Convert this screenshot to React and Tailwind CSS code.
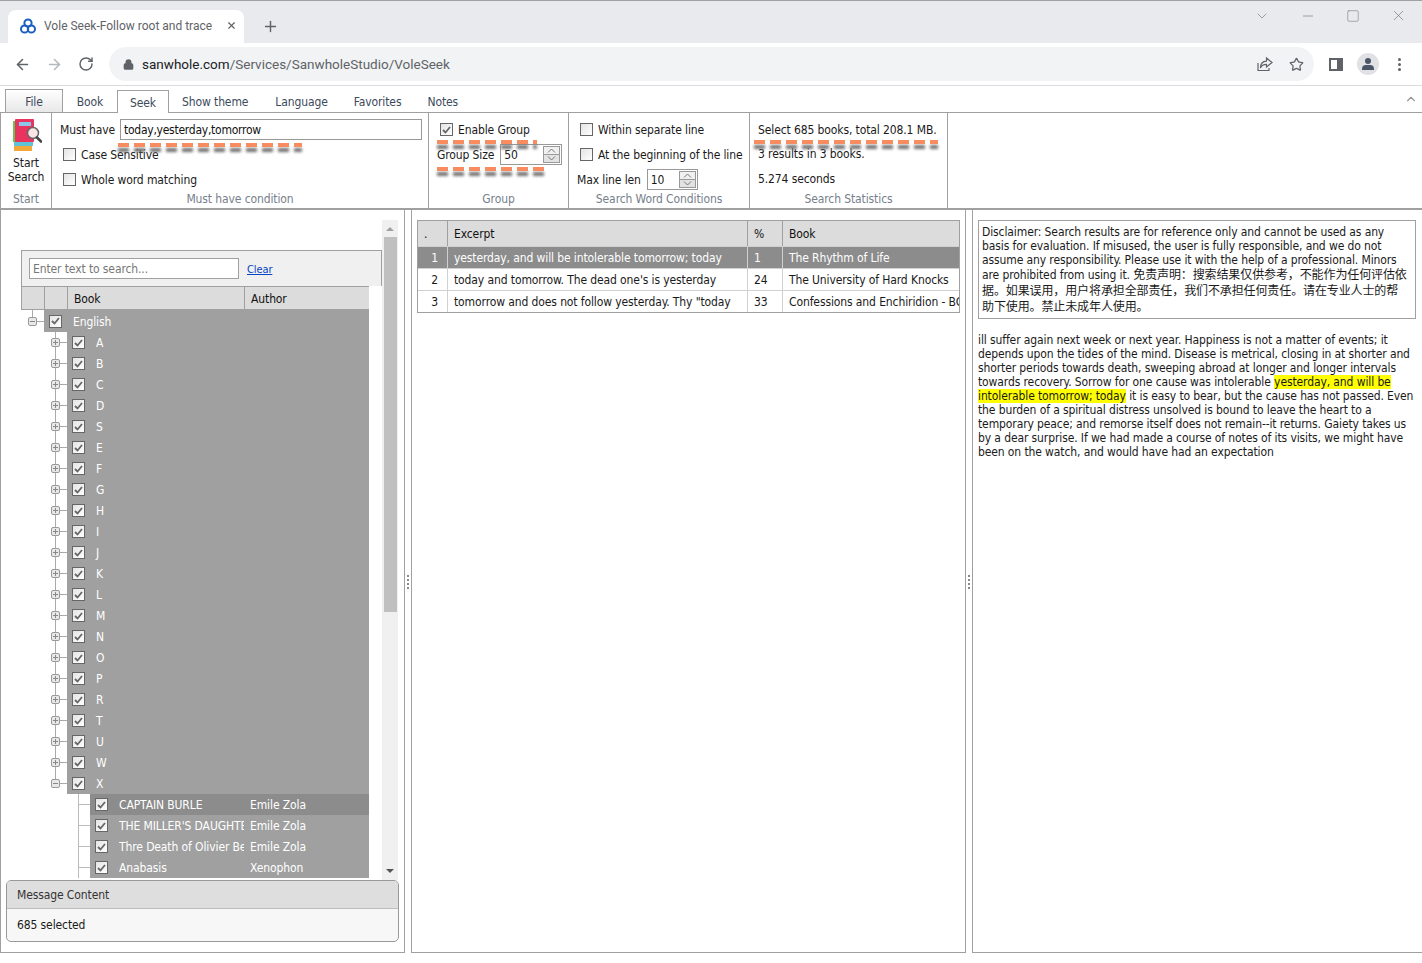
import { ArrowLeft, ArrowRight, RotateCw, Lock, Star, Plus, X, ChevronDown, ChevronUp, Minus, Square } from 'lucide-react'

const letters = ['A', 'B', 'C', 'D', 'S', 'E', 'F', 'G', 'H', 'I', 'J', 'K', 'L', 'M', 'N', 'O', 'P', 'R', 'T', 'U', 'W', 'X']

const books = [
  ['CAPTAIN BURLE', 'Emile Zola'],
  ["THE MILLER'S DAUGHTER", 'Emile Zola'],
  ['Thre Death of Olivier Becaille', 'Emile Zola'],
  ['Anabasis', 'Xenophon'],
]

const results = [
  ['1', 'yesterday, and will be intolerable tomorrow; today', '1', 'The Rhythm of Life'],
  ['2', "today and tomorrow. The dead one's is yesterday", '24', 'The University of Hard Knocks'],
  ['3', 'tomorrow and does not follow yesterday. Thy "today', '33', 'Confessions and Enchiridion - BOOK'],
]

const Dashes = ({ className }) => (
  <div className={`absolute pointer-events-none ${className}`}>
    <div className="absolute left-0 right-0 top-[5px] h-[4px] blur-[1.5px] bg-[repeating-linear-gradient(90deg,#707070_0,#707070_11px,transparent_11px,transparent_16px)]"></div>
    <div className="absolute left-0 right-0 top-0 h-[4px] bg-[repeating-linear-gradient(90deg,#f78c60_0,#f78c60_11px,transparent_11px,transparent_16px)]"></div>
  </div>
)

const Check = ({ checked, className = '' }) => (
  <span className={`w-[13px] h-[13px] flex-none border border-[#666] bg-gradient-to-br from-[#e4e4e4] to-white flex items-center justify-center ${className}`}>
    {checked && (
      <svg width="9" height="8" viewBox="0 0 9 8" fill="none" stroke="#666" strokeWidth="1.8">
        <path d="M1 4l2.5 2.5L8 1" />
      </svg>
    )}
  </span>
)

const Spinner = () => (
  <span className="flex flex-col w-[17px] h-[17px] border border-[#999] mr-px my-px flex-none">
    <span className="flex-1 flex items-center justify-center border-b border-[#999] bg-[#f0f0f0]">
      <svg width="9" height="5" viewBox="0 0 9 5" fill="none" stroke="#777"><path d="M1 4.5l3.5-3.5L8 4.5" /></svg>
    </span>
    <span className="flex-1 flex items-center justify-center bg-[#e2e2e2]">
      <svg width="9" height="5" viewBox="0 0 9 5" fill="none" stroke="#777"><path d="M1 .5L4.5 4 8 .5" /></svg>
    </span>
  </span>
)

const Expander = ({ open }) => (
  <span className="w-[9px] h-[9px] border border-[#999] rounded-[2px] bg-[#e8e8e8] relative flex-none">
    <span className="absolute left-px right-px top-[3px] h-px bg-[#888]"></span>
    {!open && <span className="absolute top-px bottom-px left-[3px] w-px bg-[#888]"></span>}
  </span>
)

const Grip = () => (
  <div className="w-[6px] flex-none flex items-center justify-center">
    <div className="flex flex-col gap-[2px]">
      <span className="w-[2px] h-[2px] bg-[#888]"></span>
      <span className="w-[2px] h-[2px] bg-[#888]"></span>
      <span className="w-[2px] h-[2px] bg-[#888]"></span>
      <span className="w-[2px] h-[2px] bg-[#888]"></span>
    </div>
  </div>
)

const GroupTitle = ({ children }) => (
  <div className="h-[19px] flex-none leading-[21px] text-center text-[#76808c]">{children}</div>
)

const App = () => {
  return (
    <div className="w-[1422px] h-[963px] overflow-hidden bg-white text-[12px] tracking-[-0.11px] text-[#1a1a1a] font-['DejaVu_Sans_Condensed','Noto_Sans_CJK_SC',sans-serif]">
      {/* Browser tabs */}
      <div className="h-[43px] bg-[#e8eaed] border-t border-[#a0a0a0] flex items-end pl-[8px] tracking-normal font-['Roboto',sans-serif]">
        <div className="w-[236px] h-[33px] bg-white rounded-t-[8px] flex items-center pl-[12px] pr-[7px] pb-[2px]">
          <svg width="16" height="16" viewBox="0 0 16 16" fill="none" stroke="#1d5fbf" strokeWidth="2" className="flex-none">
            <circle cx="8" cy="5" r="3.6" />
            <circle cx="4.6" cy="11" r="3.6" />
            <circle cx="11.4" cy="11" r="3.6" />
          </svg>
          <span className="ml-[8px] w-[168px] overflow-hidden whitespace-nowrap text-[12px] text-[#5f6368]">Vole Seek-Follow root and trace</span>
          <X size={11} strokeWidth={2.5} className="ml-auto text-[#5f6368]" />
        </div>
        <Plus size={17} strokeWidth={2} className="ml-[18px] mb-[8px] text-[#5f6368]" />
        <div className="ml-auto mb-[19px] flex items-center text-[#777] pr-[15px] gap-[30px]">
          <ChevronDown size={16} strokeWidth={1} />
          <Minus size={16} strokeWidth={1} />
          <Square size={14} strokeWidth={1} />
          <X size={17} strokeWidth={1} />
        </div>
      </div>

      {/* Browser toolbar */}
      <div className="h-[43px] border-b border-[#dadce0] flex items-center pl-[14px] tracking-normal font-['Roboto',sans-serif]">
        <ArrowLeft size={17} strokeWidth={2.2} className="text-[#5f6368]" />
        <ArrowRight size={17} strokeWidth={2.2} className="ml-[15px] text-[#b5b8bd]" />
        <RotateCw size={16} strokeWidth={2.2} className="ml-[15px] text-[#5f6368]" />
        <div className="ml-[15px] w-[1205px] h-[34px] rounded-full bg-[#f1f3f4] flex items-center pl-[14px] pr-[10px]">
          <Lock size={11} strokeWidth={3} className="text-[#5f6368] fill-[#5f6368]" />
          <span className="ml-[8px] pt-[1px] text-[13.5px] text-[#5f6368] whitespace-nowrap"><span className="text-[#202124]">sanwhole.com</span>/Services/SanwholeStudio/VoleSeek</span>
          <svg width="16" height="16" viewBox="0 0 16 16" fill="none" stroke="#5f6368" strokeWidth="1.2" className="ml-auto">
            <path d="M1 7v7.5h11V12" />
            <path d="M9.5 2l5.5 4.5-5.5 4.5V8.3C6.5 8.3 4.5 9.500 3.5 12c0-4 2.500-6.600 6-6.800z" />
          </svg>
          <Star size={15} strokeWidth={2} className="ml-[16px] text-[#5f6368]" />
        </div>
        <span className="ml-[15px] w-[14px] h-[13px] border-[2px] border-[#5f6368] border-r-[6px] flex-none"></span>
        <span className="ml-[14px] w-[22px] h-[22px] rounded-full bg-[#dfe1e5] flex flex-col items-center justify-center flex-none">
          <span className="w-[6px] h-[6px] rounded-full bg-[#4a5568]"></span>
          <span className="w-[12px] h-[5px] mt-px rounded-t-[4px] bg-[#4a5568]"></span>
        </span>
        <span className="ml-[19px] flex flex-col gap-[2px] flex-none">
          <span className="w-[3px] h-[3px] rounded-full bg-[#5f6368]"></span>
          <span className="w-[3px] h-[3px] rounded-full bg-[#5f6368]"></span>
          <span className="w-[3px] h-[3px] rounded-full bg-[#5f6368]"></span>
        </span>
      </div>

      {/* Ribbon tabs */}
      <div className="h-[26px] flex items-end pl-[5px] relative text-[#3b4a5a]">
        <div className="w-[58px] h-[23px] pt-px border border-b-0 border-[#a0a0a0] bg-gradient-to-b from-white to-[#e8e8e8] flex items-center justify-center">File</div>
        <div className="w-[54px] h-[23px] pt-[2px] flex items-center justify-center">Book</div>
        <div className="w-[52px] h-[23px] pt-px border border-b-0 border-[#a0a0a0] bg-white flex items-center justify-center relative z-10 -mb-px">Seek</div>
        <div className="ml-[13px] h-[23px] pt-[2px] flex items-center">Show theme</div>
        <div className="ml-[27px] h-[23px] pt-[2px] flex items-center">Language</div>
        <div className="ml-[26px] h-[23px] pt-[2px] flex items-center">Favorites</div>
        <div className="ml-[26px] h-[23px] pt-[2px] flex items-center">Notes</div>
        <ChevronUp size={14} strokeWidth={2} className="ml-auto mr-[4px] mb-[6px] text-[#999]" />
      </div>

      {/* Ribbon body */}
      <div className="h-[98px] border-t border-b-2 border-[#a0a0a0] flex relative">
        <div className="w-[52px] border-l border-r border-[#a0a0a0] flex flex-col">
          <div className="flex-1 min-h-0 flex flex-col items-center">
            <svg width="32" height="34" viewBox="0 0 32 34" className="mt-[5px]">
              <rect x="4" y="28" width="18" height="5" fill="#f0a93a" />
              <rect x="4" y="24" width="19" height="4" fill="#5fc2d6" />
              <rect x="3" y="3" width="3" height="21" fill="#6cc24a" />
              <rect x="5" y="1" width="19" height="23" rx="1" fill="#e8345f" />
              <rect x="9" y="4" width="12" height="4" fill="#8cc4ea" />
              <circle cx="23" cy="15" r="5.5" fill="#fbe4e4" stroke="#666" strokeWidth="1.500" />
              <path d="M27 19.500l4 4" stroke="#444" strokeWidth="2.500" strokeLinecap="round" />
            </svg>
            <div className="mt-[4px] text-center leading-[14px]">Start<br />Search</div>
          </div>
          <GroupTitle>Start</GroupTitle>
        </div>

        <div className="w-[377px] border-r border-[#a0a0a0] flex flex-col relative">
          <div className="flex-1 min-h-0 pl-[8px] pt-[6px]">
            <div className="flex items-center h-[21px]">
              <span className="text-[#222]">Must have</span>
              <div className="ml-[5px] w-[302px] h-[21px] border border-[#999] pl-[3px] leading-[20px] tracking-[-0.25px] text-[#111]">today,yesterday,tomorrow</div>
            </div>
            <label className="flex items-center mt-[6px] h-[17px] pl-[3px]">
              <Check className="mr-[5px]" />Case Sensitive
            </label>
            <label className="flex items-center mt-[8px] h-[17px] pl-[3px]">
              <Check className="mr-[5px]" />Whole word matching
            </label>
          </div>
          <GroupTitle>Must have condition</GroupTitle>
          <Dashes className="left-[66px] top-[30px] w-[184px] h-[8px]" />
        </div>

        <div className="w-[140px] border-r border-[#a0a0a0] flex flex-col relative">
          <div className="flex-1 min-h-0 pl-[8px] pt-[8px]">
            <label className="flex items-center h-[17px] pl-[3px]">
              <Check checked className="mr-[5px]" />Enable Group
            </label>
            <div className="flex items-center mt-[6px] h-[21px]">
              <span>Group Size</span>
              <div className="ml-[6px] w-[62px] h-[21px] border border-[#999] pl-[3px] flex items-center justify-between">50<Spinner /></div>
            </div>
          </div>
          <GroupTitle>Group</GroupTitle>
          <Dashes className="left-[8px] top-[27px] w-[100px] h-[8px]" />
          <Dashes className="left-[8px] top-[54px] w-[107px] h-[8px]" />
        </div>

        <div className="w-[181px] border-r border-[#a0a0a0] flex flex-col">
          <div className="flex-1 min-h-0 pl-[8px] pt-[8px]">
            <label className="flex items-center h-[17px] pl-[3px]">
              <Check className="mr-[5px]" />Within separate line
            </label>
            <label className="flex items-center mt-[8px] h-[17px] pl-[3px]">
              <Check className="mr-[5px]" />At the beginning of the line
            </label>
            <div className="flex items-center mt-[6px] h-[21px]">
              <span>Max line len</span>
              <div className="ml-[6px] w-[51px] h-[21px] border border-[#999] pl-[3px] flex items-center justify-between">10<Spinner /></div>
            </div>
          </div>
          <GroupTitle>Search Word Conditions</GroupTitle>
        </div>

        <div className="w-[198px] border-r border-[#a0a0a0] flex flex-col relative">
          <div className="flex-1 min-h-0 pl-[8px] pt-[9px] leading-[17px]">
            <div>Select 685 books, total 208.1 MB.</div>
            <div className="mt-[7px]">3 results in 3 books.</div>
            <div className="mt-[8px]">5.274 seconds</div>
          </div>
          <GroupTitle>Search Statistics</GroupTitle>
          <Dashes className="left-[4px] top-[27px] w-[184px] h-[8px]" />
        </div>
      </div>

      {/* Main panes */}
      <div className="h-[743px] flex">
        {/* Left pane */}
        <div className="w-[405px] flex-none border-l border-r border-b border-[#a0a0a0] flex flex-col pb-[10px]">
          <div className="flex-1 flex min-h-0 overflow-hidden">
            <div className="ml-[20px] w-[361px] pt-[40px]">
              <div className="h-[36px] bg-[#f0f0f0] border border-[#a0a0a0] border-b-0 flex items-center pl-[7px]">
                <div className="w-[210px] h-[21px] bg-white border border-[#a0a0a0] pl-[3px] leading-[21px] text-[#777]">Enter text to search...</div>
                <a className="ml-[8px] mt-[4px] text-[11px] text-[#0645c8] underline">Clear</a>
              </div>
              <div className="w-[348px] h-[24px] bg-[#dcdcdc] border-t border-b border-l border-[#a0a0a0] flex text-[#111]">
                <div className="w-[23px] border-r border-[#a0a0a0]"></div>
                <div className="w-[23px] border-r border-[#a0a0a0]"></div>
                <div className="w-[177px] border-r border-[#a0a0a0] pl-[6px] leading-[24px]">Book</div>
                <div className="pl-[6px] leading-[24px]">Author</div>
              </div>
              <div className="w-[348px] text-white">
                <div className="h-[22px] flex items-center">
                  <span className="w-[7px]"></span>
                  <div className="relative w-[9px] h-full flex items-center flex-none">
                    <span className="absolute top-0 bottom-1/2 left-[4px] w-px bg-[#aaa]"></span>
                    <Expander open />
                  </div>
                  <span className="w-[7px] h-px bg-[#aaa]"></span>
                  <div className="flex-1 h-full bg-[#a0a0a0] flex items-center pl-[5px]">
                    <Check checked />
                    <span className="ml-[11px] pt-[2px]">English</span>
                  </div>
                </div>
                {letters.map((l) => (
                  <div key={l} className="h-[21px] flex items-center">
                    <span className="w-[30px]"></span>
                    <div className="relative w-[9px] h-full flex items-center flex-none">
                      <span className={`absolute top-0 left-[4px] w-px bg-[#aaa] ${l === 'X' ? 'bottom-1/2' : 'bottom-0'}`}></span>
                      <Expander open={l === 'X'} />
                    </div>
                    <span className="w-[7px] h-px bg-[#aaa]"></span>
                    <div className="flex-1 h-full bg-[#a0a0a0] flex items-center pl-[5px]">
                      <Check checked />
                      <span className="ml-[11px]">{l}</span>
                    </div>
                  </div>
                ))}
                {books.map(([title, author], i) => (
                  <div key={title} className="h-[21px] flex items-center">
                    <span className="w-[57px]"></span>
                    <div className="w-[12px] h-full border-l border-[#bbb] flex items-center">
                      <span className="w-full h-px bg-[#bbb]"></span>
                    </div>
                    <div className={`flex-1 h-full flex items-center pl-[5px] ${i === 0 ? 'bg-[#8c8c8c]' : 'bg-[#a0a0a0]'}`}>
                      <Check checked />
                      <span className="ml-[11px] mr-[6px] w-[125px] overflow-hidden whitespace-nowrap">{title}</span>
                      <span>{author}</span>
                    </div>
                  </div>
                ))}
              </div>
            </div>
            <div className="mt-[10px] w-[16px] bg-[#f0f0f0] flex flex-col items-center">
              <svg width="8" height="4" viewBox="0 0 8 4" className="mt-[7px] flex-none"><path d="M0 4l4-4 4 4z" fill="#a0a0a0" /></svg>
              <div className="mt-[6px] w-[13px] h-[375px] bg-[#c0c0c0]"></div>
              <svg width="8" height="4" viewBox="0 0 8 4" className="mt-auto mb-[7px] flex-none"><path d="M0 0l4 4 4-4z" fill="#555" /></svg>
            </div>
          </div>
          <div className="mx-[5px] h-[62px] flex-none border border-[#999] rounded-[5px] overflow-hidden bg-[#f7f7f7]">
            <div className="h-[28px] bg-[#dedede] border-b border-[#bdbdbd] pl-[10px] leading-[29px] text-[#333]">Message Content</div>
            <div className="pl-[10px] pt-[7px]">685 selected</div>
          </div>
        </div>

        <Grip />

        {/* Middle pane */}
        <div className="w-[555px] flex-none border-l border-r border-b border-[#a0a0a0] pl-[5px] pt-[10px]">
          <div className="w-[543px] border border-[#a0a0a0] overflow-hidden">
            <div className="h-[25px] flex bg-[#dcdcdc] leading-[27px] text-[#111]">
              <div className="w-[30px] border-r border-[#a0a0a0] pl-[6px]">.</div>
              <div className="w-[300px] border-r border-[#a0a0a0] pl-[6px]">Excerpt</div>
              <div className="w-[35px] border-r border-[#a0a0a0] pl-[6px]">%</div>
              <div className="flex-1 pl-[6px]">Book</div>
            </div>
            {results.map((r, i) => (
              <div key={r[0]} className={`h-[22px] flex leading-[23px] whitespace-nowrap border-t border-[#d0d0d0] ${i === 0 ? 'bg-[#8c8c8c] text-white' : ''}`}>
                <div className="w-[30px] border-r border-[#d0d0d0] pr-[9px] text-right">{r[0]}</div>
                <div className="w-[300px] border-r border-[#d0d0d0] pl-[6px] overflow-hidden">{r[1]}</div>
                <div className="w-[35px] border-r border-[#d0d0d0] pl-[6px]">{r[2]}</div>
                <div className="flex-1 min-w-0 pl-[6px] overflow-hidden">{r[3]}</div>
              </div>
            ))}
          </div>
        </div>

        <Grip />

        {/* Right pane */}
        <div className="flex-1 min-w-0 border-l border-b border-[#a0a0a0] pl-[5px] pr-[6px] pt-[10px]">
          <div className="h-[99px] border border-[#a0a0a0] pl-[3px] pt-[4px] leading-[14px] whitespace-nowrap">
            Disclaimer: Search results are for reference only and cannot be used as any<br />
            basis for evaluation. If misused, the user is fully responsible, and we do not<br />
            assume any responsibility. Please use it with the help of a professional. Minors<br />
            <span className="leading-[16px]">are prohibited from using it. 免责声明：搜索结果仅供参考，不能作为任何评估依</span><br />
            <span className="leading-[16px]">据。如果误用，用户将承担全部责任，我们不承担任何责任。请在专业人士的帮</span><br />
            <span className="leading-[16px]">助下使用。禁止未成年人使用。</span>
          </div>
          <div className="mt-[14px] leading-[14px] whitespace-nowrap">
            ill suffer again next week or next year. Happiness is not a matter of events; it<br />
            depends upon the tides of the mind. Disease is metrical, closing in at shorter and<br />
            shorter periods towards death, sweeping abroad at longer and longer intervals<br />
            towards recovery. Sorrow for one cause was intolerable <span className="bg-[#ffff00]">yesterday, and will be</span><br />
            <span className="bg-[#ffff00]">intolerable tomorrow; today</span> it is easy to bear, but the cause has not passed. Even<br />
            the burden of a spiritual distress unsolved is bound to leave the heart to a<br />
            temporary peace; and remorse itself does not remain--it returns. Gaiety takes us<br />
            by a dear surprise. If we had made a course of notes of its visits, we might have<br />
            been on the watch, and would have had an expectation
          </div>
        </div>
      </div>
    </div>
  )
}

export default App
